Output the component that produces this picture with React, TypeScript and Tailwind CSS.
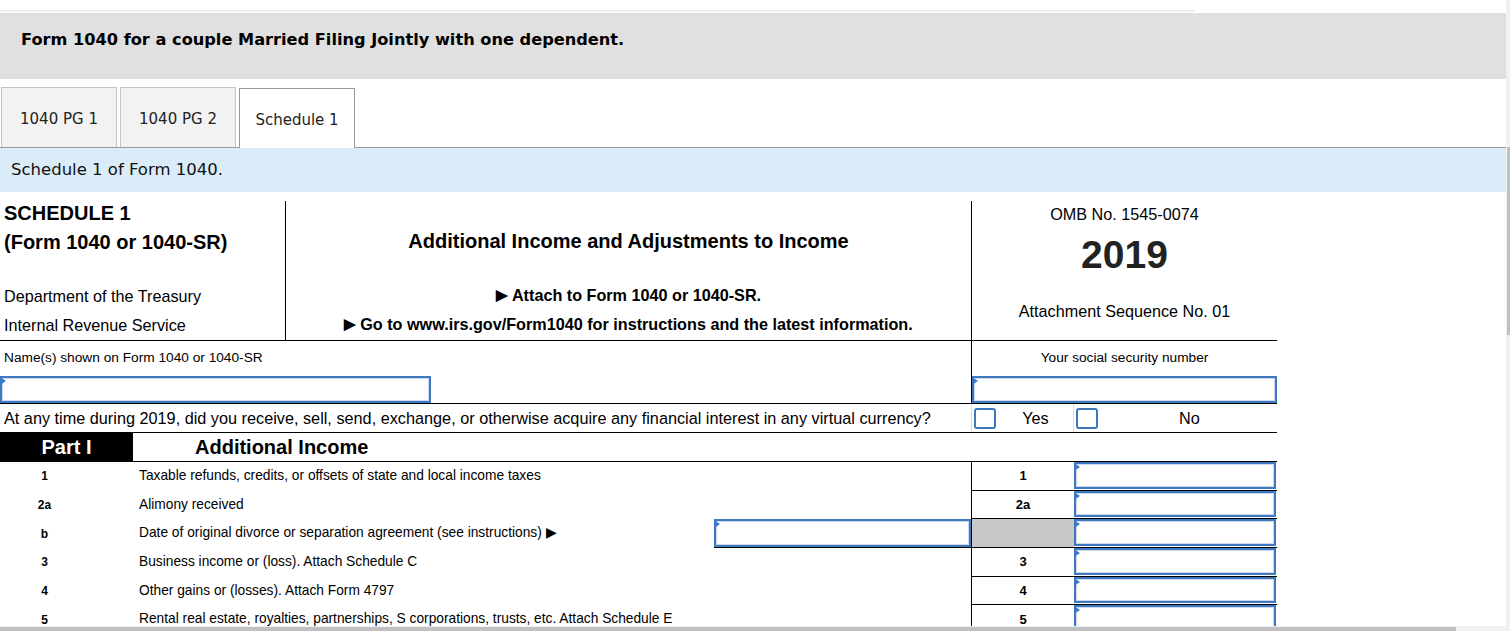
import React from "react";

const verdana = "font-['DejaVu_Sans',Verdana,sans-serif]";
const arial = "font-['Liberation_Sans',Arial,sans-serif]";

function Field({ className = "" }: { className?: string }) {
  return (
    <div className={`relative border-2 border-[#4179c1] bg-white shadow-[inset_0_0_0_1px_#cbd9ee] ${className}`}>
      <span className="absolute left-[-2px] top-[-1px] h-0 w-0 border-y-[4px] border-l-[6px] border-y-transparent border-l-[#3a77c6]" />
    </div>
  );
}

function Checkbox() {
  return <div className="h-[21px] w-[22px] shrink-0 rounded-[3px] border-2 border-[#3c77c0] bg-white" />;
}

type Line = { num: string; text: string; label: string; dated?: boolean };

const lines: Line[] = [
  { num: "1", text: "Taxable refunds, credits, or offsets of state and local income taxes", label: "1" },
  { num: "2a", text: "Alimony received", label: "2a" },
  { num: "b", text: "Date of original divorce or separation agreement (see instructions) \u25B6", label: "", dated: true },
  { num: "3", text: "Business income or (loss). Attach Schedule C", label: "3" },
  { num: "4", text: "Other gains or (losses). Attach Form 4797", label: "4" },
  { num: "5", text: "Rental real estate, royalties, partnerships, S corporations, trusts, etc. Attach Schedule E", label: "5" },
];

function Tabs() {
  const tabs = ["1040 PG 1", "1040 PG 2", "Schedule 1"];
  return (
    <div className="mt-[9px] flex h-[60px] items-end border-b border-[#999999] pl-[1px]">
      {tabs.map((t, i) => {
        const active = i === 2;
        return (
          <div
            key={t}
            className={`mr-[3px] flex h-[60px] w-[116px] items-center justify-center pt-[3px] text-[15px] text-[#222] ${
              active
                ? "-mb-px border border-b-0 border-[#999999] bg-white"
                : "border border-b-0 border-[#c4c4c4] bg-[#f2f2f2]"
            }`}
          >
            {t}
          </div>
        );
      })}
    </div>
  );
}

function FormHeader() {
  return (
    <div className="flex w-[1277px] border-b border-black">
      <div className="flex w-[286px] flex-col border-r border-black pl-1">
        <div className="flex h-[26px] items-center pb-[2px] text-[20px] font-bold">SCHEDULE 1</div>
        <div className="flex h-[29px] items-center text-[20px] font-bold">(Form 1040 or 1040-SR)</div>
        <div className="h-[26px]" />
        <div className="flex h-[29px] items-center text-[16.2px]">Department of the Treasury</div>
        <div className="flex h-[29px] items-center text-[16.2px]">Internal Revenue Service</div>
      </div>
      <div className="flex w-[686px] flex-col border-r border-black text-center">
        <div className="flex h-[80px] items-center justify-center text-[20px] font-bold">
          Additional Income and Adjustments to Income
        </div>
        <div className="flex h-[29px] items-center justify-center text-[16.2px] font-bold">
          <span className="mr-[4px] text-[15px]">{"\u25B6"}</span>Attach to Form 1040 or 1040-SR.
        </div>
        <div className="flex h-[29px] items-center justify-center text-[16.2px] font-bold">
          <span className="mr-[4px] text-[15px]">{"\u25B6"}</span>Go to www.irs.gov/Form1040 for instructions and the latest information.
        </div>
        <div className="h-[1px]" />
      </div>
      <div className="flex flex-1 flex-col text-center">
        <div className="flex h-[27px] items-center justify-center text-[16.2px]">OMB No. 1545-0074</div>
        <div className="flex h-[54px] items-center justify-center text-[39px] font-bold text-[#222]">2019</div>
        <div className="flex h-[58px] items-center justify-center text-[16.2px]">Attachment Sequence No. 01</div>
      </div>
    </div>
  );
}

function LineRow({ line }: { line: Line }) {
  return (
    <div className="flex h-[28.7px] w-[1277px]">
      <div className="flex flex-1 items-center">
        <div className="w-[89px] text-center text-[12px] font-bold">{line.num}</div>
        <div className="flex-1 pl-[50px] text-[13.75px]">{line.text}</div>
        {line.dated && (
          <div className="flex h-full w-[257px] flex-col border-b border-black">
            <Field className="flex-1" />
          </div>
        )}
      </div>
      <div
        className={`flex w-[103px] items-center justify-center border-b border-l border-black text-[13px] font-bold ${
          line.dated ? "bg-[#c8c8c8]" : ""
        }`}
      >
        {line.label}
      </div>
      <div className="flex w-[203px] flex-col border-b border-black pb-[1px] pr-[1px]">
        <Field className="flex-1" />
      </div>
    </div>
  );
}

function ScheduleForm() {
  return (
    <div className={`${arial} mt-[9px] text-black`}>
      <FormHeader />

      <div className="flex h-[63px] w-[1277px] border-b border-black">
        <div className="flex w-[971px] flex-col justify-between">
          <div className="flex h-[34px] items-center pl-1 text-[13.7px]">Name(s) shown on Form 1040 or 1040-SR</div>
          <Field className="h-[27px] w-[431px]" />
        </div>
        <div className="flex flex-1 flex-col justify-between border-l border-black">
          <div className="flex h-[34px] items-center justify-center text-[13.7px]">Your social security number</div>
          <Field className="h-[27px] w-full" />
        </div>
      </div>

      <div className="flex h-[29px] w-[1277px] border-b border-black">
        <div className="flex w-[971px] items-center pl-1 pt-[1px] text-[16.25px]">
          At any time during 2019, did you receive, sell, send, exchange, or otherwise acquire any financial interest in any virtual currency?
        </div>
        <div className="flex w-[102px] items-center border-l border-[#dddddd] pl-[2px] text-[16.25px]">
          <Checkbox />
          <span className="flex-1 pl-[2px] text-center">Yes</span>
        </div>
        <div className="flex flex-1 items-center border-l border-[#dddddd] pl-[2px] text-[16.25px]">
          <Checkbox />
          <span className="flex-1 pl-[4px] text-center">No</span>
        </div>
      </div>

      <div className="flex h-[29px] w-[1277px]">
        <div className="flex w-[133px] items-center justify-center bg-black pb-[1px] text-[20px] font-bold text-white">Part I</div>
        <div className="flex flex-1 items-center border-b border-black pb-[1px] pl-[62px] text-[20px] font-bold">Additional Income</div>
      </div>

      {lines.map((l) => (
        <LineRow key={l.num} line={l} />
      ))}
    </div>
  );
}

export default function App() {
  return (
    <div className="flex h-[631px] w-[1510px] flex-col overflow-hidden bg-white">
      <div className="flex min-h-0 flex-1">
        <div className="min-w-0 flex-1 overflow-hidden">
          <div className="mt-[10px] h-[2px] w-[1195px] bg-[#eeeeee]" />
          <div className={`${verdana} mt-px flex h-[66px] bg-[#e0e0e0] pl-[21px] pt-[18px]`}>
            <h2 className="text-[16.2px] font-bold leading-[18px] text-black">
              Form 1040 for a couple Married Filing Jointly with one dependent.
            </h2>
          </div>
          <div className={verdana}>
            <Tabs />
            <div className="flex h-[44px] items-center bg-[#dbecf9] px-[11px] pt-[1px] text-[16.5px] text-[#111]">
              Schedule 1 of Form 1040.
            </div>
          </div>
          <ScheduleForm />
        </div>
        <div className="flex w-[4px] flex-col bg-[#f1f1f1]">
          <div className="h-[147px]" />
          <div className="ml-px h-[188px] bg-[#c1c1c1]" />
        </div>
      </div>
      <div className="flex h-[5px] bg-[#f1f1f1]">
        <div className="mt-px w-[1456px] bg-[#c1c1c1]" />
      </div>
    </div>
  );
}
